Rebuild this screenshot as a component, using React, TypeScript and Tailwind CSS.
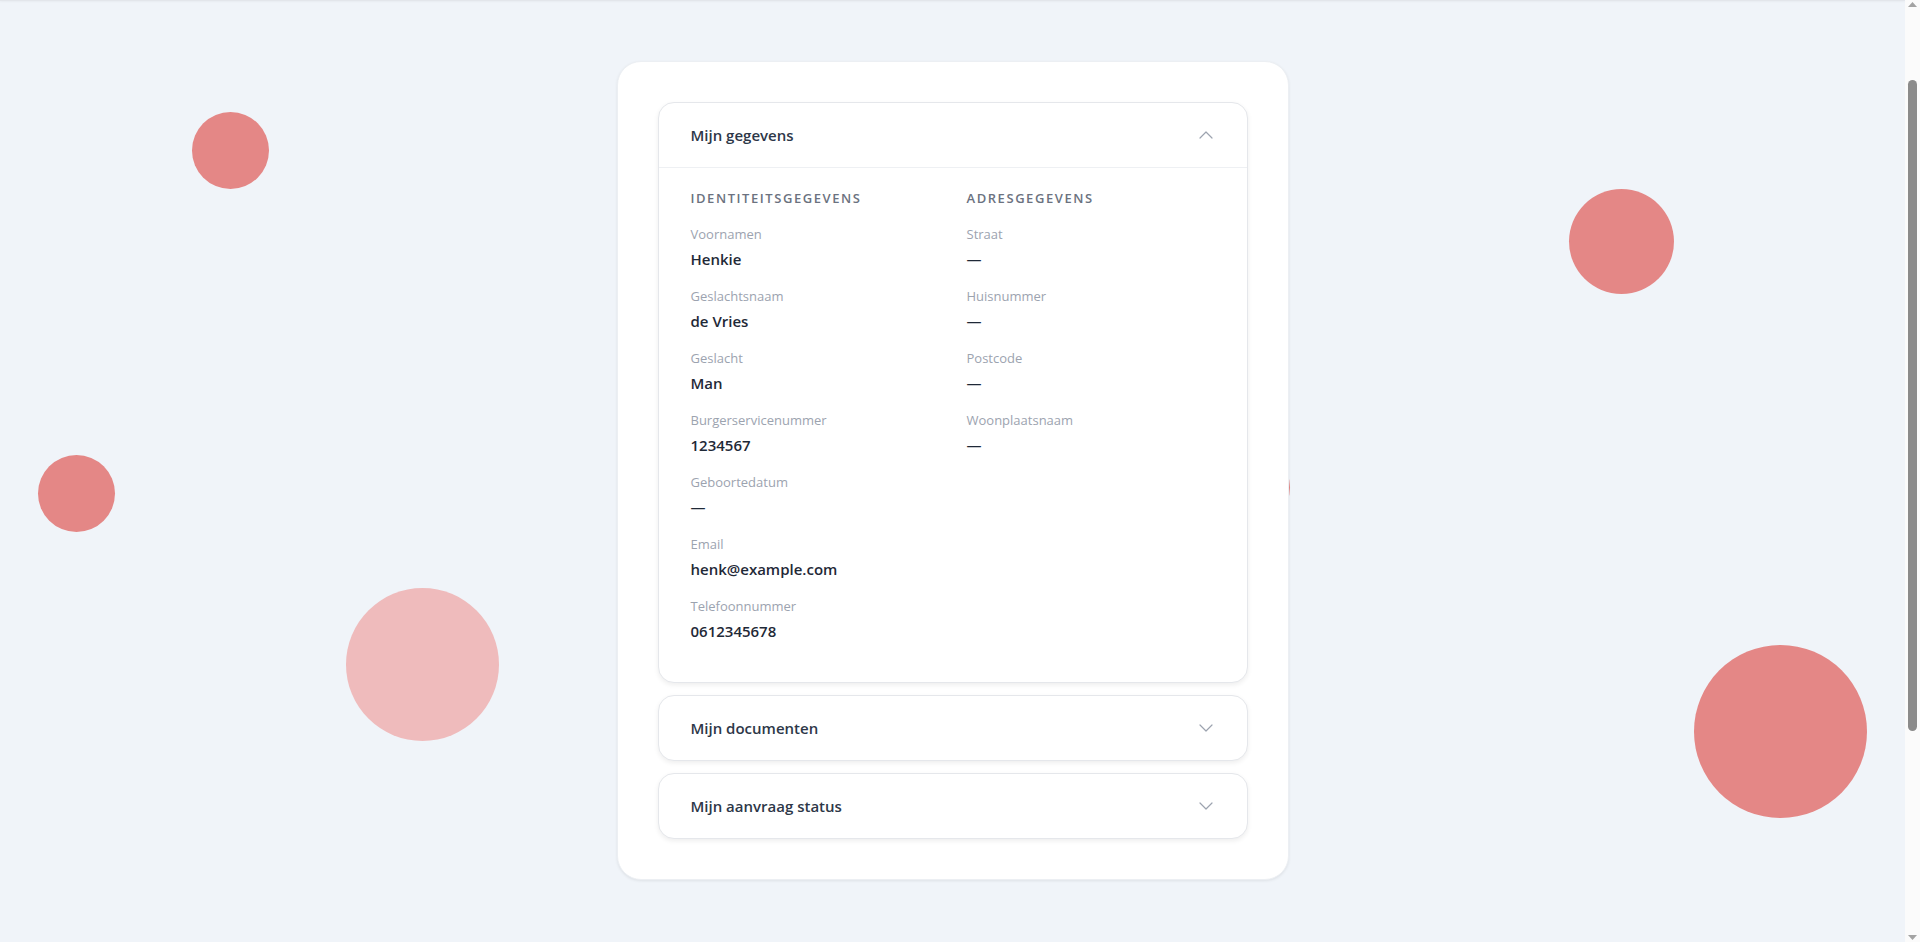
import { ChevronDown, ChevronUp } from "lucide-react";

const identity = [
  ["Voornamen", "Henkie"],
  ["Geslachtsnaam", "de Vries"],
  ["Geslacht", "Man"],
  ["Burgerservicenummer", "1234567"],
  ["Geboortedatum", "—"],
  ["Email", "henk@example.com"],
  ["Telefoonnummer", "0612345678"],
];

const address = [
  ["Straat", "—"],
  ["Huisnummer", "—"],
  ["Postcode", "—"],
  ["Woonplaatsnaam", "—"],
];

function Field({ label, value }: { label: string; value: string }) {
  return (
    <div>
      <div className="text-[13px] leading-5 text-[#9ca3af]">{label}</div>
      <div className="mt-1 text-[15px] leading-[22px] font-semibold text-[#1f2937]">{value}</div>
    </div>
  );
}

function Column({ title, rows }: { title: string; rows: string[][] }) {
  return (
    <div>
      <div className="mb-[18px] text-[13px] leading-4 font-semibold uppercase tracking-[0.12em] text-[#6b7280]">
        {title}
      </div>
      <div className="flex flex-col gap-4">
        {rows.map(([l, v]) => (
          <Field key={l} label={l} value={v} />
        ))}
      </div>
    </div>
  );
}

function Header({ title, open }: { title: string; open?: boolean }) {
  return (
    <div
      className={`flex items-center justify-between px-8 py-5 ${open ? "border-b border-[#eef0f3]" : ""}`}
    >
      <span className="text-[15px] leading-6 font-semibold text-[#2d3748]">{title}</span>
      {open ? (
        <ChevronUp size={24} strokeWidth={1.2} className="mr-[-3px] text-[#9ca3af]" />
      ) : (
        <ChevronDown size={24} strokeWidth={1.2} className="mr-[-3px] text-[#9ca3af]" />
      )}
    </div>
  );
}

function FakeScrollbar() {
  return (
    <div className="flex h-screen w-[15px] shrink-0 flex-col items-center bg-[#fbfbfb]">
      <div className="flex h-[17px] w-full items-start justify-center pt-[2px]">
        <svg width="9" height="5" viewBox="0 0 9 5">
          <path d="M0 5 L4.5 0 L9 5 Z" fill="#a3a3a3" />
        </svg>
      </div>
      <div className="w-full flex-1 px-[3px]">
        <div className="mt-[63px] h-[651px] w-full rounded-full bg-[#8b8b8b]" />
      </div>
      <div className="flex h-[17px] w-full items-end justify-center pb-[2px]">
        <svg width="9" height="5" viewBox="0 0 9 5">
          <path d="M0 0 L9 0 L4.5 5 Z" fill="#a3a3a3" />
        </svg>
      </div>
    </div>
  );
}

export default function App() {
  return (
    <div className="relative flex h-screen w-full overflow-hidden bg-[#f0f4f9] font-['Open_Sans',sans-serif]">
      {/* decorative circles */}
      <div className="pointer-events-none absolute inset-0">
        <div className="absolute left-[192px] top-[112px] h-[77px] w-[77px] rounded-full bg-[#e48786]" />
        <div className="absolute left-[38px] top-[455px] h-[77px] w-[77px] rounded-full bg-[#e48786]" />
        <div className="absolute left-[346px] top-[588px] h-[153px] w-[153px] rounded-full bg-[#efbbbc]" />
        <div className="absolute left-[1569px] top-[189px] h-[105px] w-[105px] rounded-full bg-[#e48786]" />
        <div className="absolute left-[1694px] top-[645px] h-[173px] w-[173px] rounded-full bg-[#e48786]" />
        <div className="absolute left-[1213px] top-[449px] h-[77px] w-[77px] rounded-full bg-[#e48786]" />
      </div>

      <div className="relative flex min-w-0 flex-1 flex-col">
        <div className="h-[1px] shrink-0 bg-[#e3e6eb] shadow-[0_1px_2px_rgba(0,0,0,0.05)]" />
        <main className="flex justify-center px-4 pt-[60px]">
          <div className="w-full max-w-2xl rounded-3xl border border-[#eceff3] bg-white p-10 shadow-[0_1px_3px_rgba(0,0,0,0.08)]">
            <div className="flex flex-col gap-3">
              <div className="overflow-hidden rounded-2xl border border-[#e5e7eb] bg-white shadow-[0_2px_5px_rgba(0,0,0,0.07)]">
                <Header title="Mijn gegevens" open />
                <div className="grid grid-cols-2 gap-x-7 px-8 pt-[22px] pb-10">
                  <Column title="Identiteitsgegevens" rows={identity} />
                  <Column title="Adresgegevens" rows={address} />
                </div>
              </div>
              <div className="rounded-2xl border border-[#e5e7eb] bg-white shadow-[0_2px_5px_rgba(0,0,0,0.07)]">
                <Header title="Mijn documenten" />
              </div>
              <div className="rounded-2xl border border-[#e5e7eb] bg-white shadow-[0_2px_5px_rgba(0,0,0,0.07)]">
                <Header title="Mijn aanvraag status" />
              </div>
            </div>
          </div>
        </main>
      </div>
      <FakeScrollbar />
    </div>
  );
}
